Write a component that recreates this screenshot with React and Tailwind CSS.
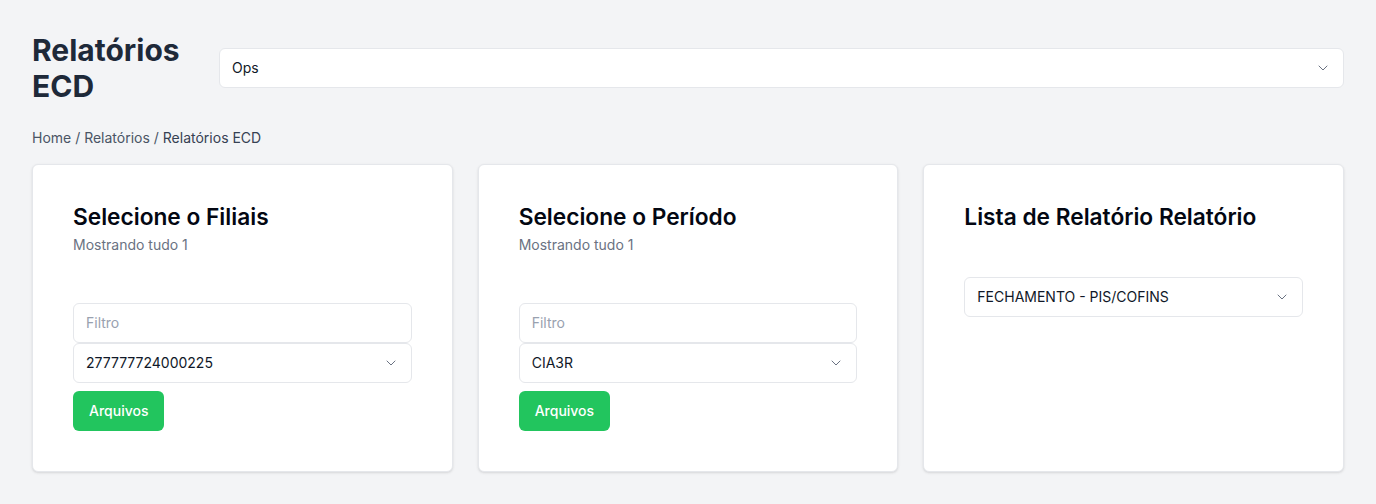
import React from 'react';
import { ChevronDown } from 'lucide-react';

const SelectBox = ({ value, className = '' }) => (
  <div
    className={`flex h-10 items-center justify-between rounded-md border border-gray-200 bg-white px-3 text-sm text-gray-900 ${className}`}
  >
    <span>{value}</span>
    <ChevronDown className="h-4 w-4 text-gray-500" strokeWidth={1.5} />
  </div>
);

const PickerCard = ({ title, subtitle, value }) => (
  <div className="rounded-md border border-gray-200 bg-white p-10 shadow-sm">
    <h2 className="text-[22.7px] font-semibold leading-6 text-gray-950">{title}</h2>
    <p className="mt-1.5 text-sm text-gray-500">{subtitle}</p>
    <div className="mt-[48px]">
      <div className="flex h-10 items-center rounded-md border border-gray-200 bg-white px-3 text-sm text-gray-400">
        Filtro
      </div>
      <SelectBox value={value} />
      <button className="mt-2 h-10 rounded-md bg-[#22c55e] px-4 text-sm font-medium text-white">
        Arquivos
      </button>
    </div>
  </div>
);

export default function App() {
  return (
    <div
      className="min-h-[504px] bg-gray-100 px-8 pt-8"
      style={{ fontFamily: 'Inter, "Noto Sans", sans-serif' }}
    >
      {/* Header */}
      <div className="flex items-center gap-8">
        <h1 className="w-[155px] shrink-0 text-3xl font-bold leading-9 text-gray-800">
          Relatórios ECD
        </h1>
        <SelectBox value="Ops" className="flex-1" />
      </div>

      {/* Breadcrumb */}
      <div className="mt-6 text-sm text-gray-600">
        Home / Relatórios / <span className="text-gray-700">Relatórios ECD</span>
      </div>

      {/* Cards */}
      <div className="mt-4 grid grid-cols-3 gap-[25px]">
        <PickerCard title="Selecione o Filiais" subtitle="Mostrando tudo 1" value="277777724000225" />
        <PickerCard title="Selecione o Período" subtitle="Mostrando tudo 1" value="CIA3R" />
        <div className="rounded-md border border-gray-200 bg-white p-10 shadow-sm">
          <h2 className="text-[22.7px] font-semibold leading-6 text-gray-950">
            Lista de Relatório Relatório
          </h2>
          <SelectBox value="FECHAMENTO - PIS/COFINS" className="mt-[48px]" />
        </div>
      </div>
    </div>
  );
}
